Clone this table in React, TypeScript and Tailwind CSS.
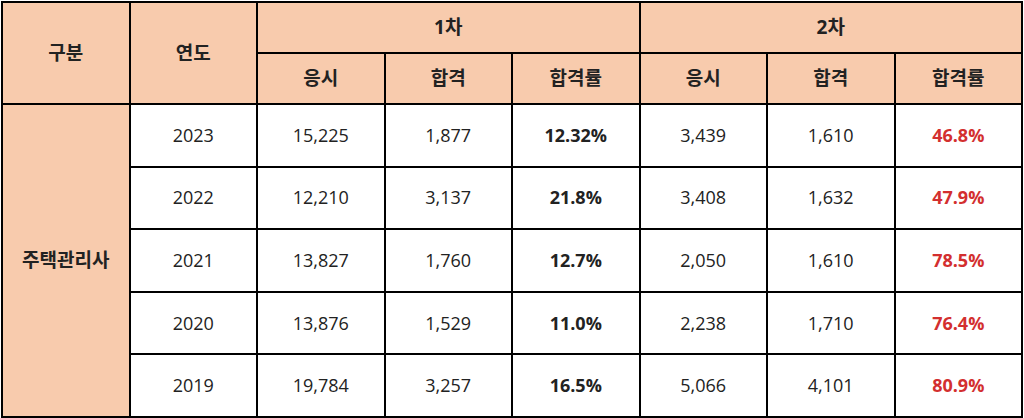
import React from 'react';

const rows = [
  { year: '2023', a1: '15,225', p1: '1,877', r1: '12.32%', a2: '3,439', p2: '1,610', r2: '46.8%' },
  { year: '2022', a1: '12,210', p1: '3,137', r1: '21.8%', a2: '3,408', p2: '1,632', r2: '47.9%' },
  { year: '2021', a1: '13,827', p1: '1,760', r1: '12.7%', a2: '2,050', p2: '1,610', r2: '78.5%' },
  { year: '2020', a1: '13,876', p1: '1,529', r1: '11.0%', a2: '2,238', p2: '1,710', r2: '76.4%' },
  { year: '2019', a1: '19,784', p1: '3,257', r1: '16.5%', a2: '5,066', p2: '4,101', r2: '80.9%' },
];

// peach header cells, Korean labels a touch larger
const head = 'border-2 border-black bg-[#f8cbad] font-bold text-center align-middle text-[19px]';
const cell = 'border-2 border-black bg-white text-center align-middle';

const App = () => {
  return (
    <div className="w-[1024px] h-[418px] bg-white p-px text-[18px] text-[#222] font-['Open_Sans','Noto_Sans_CJK_KR',sans-serif]">
      <table className="w-full border-collapse table-fixed">
        <thead>
          <tr className="h-[51px]">
            <th rowSpan={2} className={head}>구분</th>
            <th rowSpan={2} className={head}>연도</th>
            <th colSpan={3} className={head + ' text-[18px]'}>1차</th>
            <th colSpan={3} className={head + ' text-[18px]'}>2차</th>
          </tr>
          <tr className="h-[51px]">
            <th className={head}>응시</th>
            <th className={head}>합격</th>
            <th className={head}>합격률</th>
            <th className={head}>응시</th>
            <th className={head}>합격</th>
            <th className={head}>합격률</th>
          </tr>
        </thead>
        <tbody>
          {rows.map((r, i) => (
            <tr key={r.year} className="h-[62.6px]">
              {i === 0 && (
                <td rowSpan={5} className={head}>주택관리사</td>
              )}
              <td className={cell}>{r.year}</td>
              <td className={cell}>{r.a1}</td>
              <td className={cell}>{r.p1}</td>
              <td className={cell + ' font-bold'}>{r.r1}</td>
              <td className={cell}>{r.a2}</td>
              <td className={cell}>{r.p2}</td>
              <td className={cell + ' font-bold text-[#d32f2f]'}>{r.r2}</td>
            </tr>
          ))}
        </tbody>
      </table>
    </div>
  );
};

export default App;
